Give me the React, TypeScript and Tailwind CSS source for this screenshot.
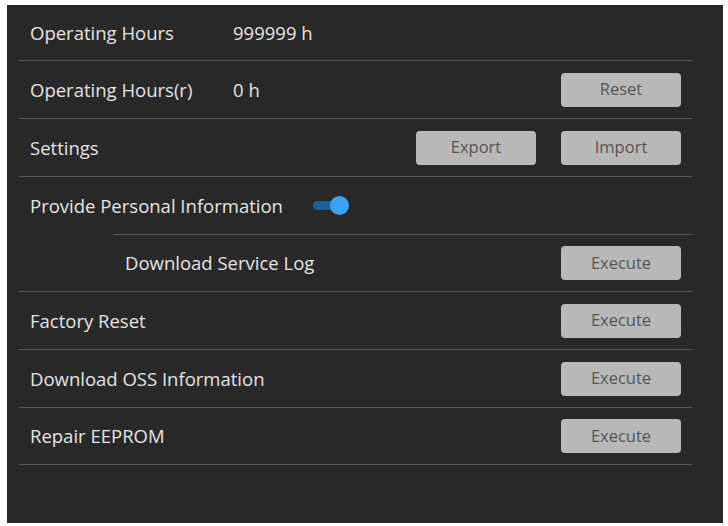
import React, { useState } from "react";

const Btn = ({ label }: { label: string }) => (
  <button className="w-[120px] h-[34px] rounded-[4px] bg-[#b9b9b9] text-[#545454] text-[16.5px]">
    {label}
  </button>
);

const Row = ({
  children,
  h = "h-[58px]",
}: {
  children: React.ReactNode;
  h?: string;
}) => (
  <div className={`flex items-center px-[11px] border-b border-[#5a5a5a] ${h}`}>
    {children}
  </div>
);

const App = () => {
  const [on, setOn] = useState(true);

  return (
    <div
      className="w-[728px] h-[526px] bg-white pt-[5px] pl-[7px]"
      style={{ fontFamily: '"Open Sans", "Noto Sans", sans-serif' }}
    >
      <div className="w-[716px] h-[518px] bg-[#282828] pl-[12px] pr-[31px] text-[#e4e4e4] text-[18.5px]">
        <Row h="h-[56px]">
          <span className="w-[203px]">Operating Hours</span>
          <span>999999 h</span>
        </Row>
        <Row>
          <span className="w-[203px]">Operating Hours(r)</span>
          <span>0 h</span>
          <div className="ml-auto">
            <Btn label="Reset" />
          </div>
        </Row>
        <Row>
          <span>Settings</span>
          <div className="ml-auto flex gap-[25px]">
            <Btn label="Export" />
            <Btn label="Import" />
          </div>
        </Row>
        <div className="flex items-center px-[11px] h-[57px]">
          <span>Provide Personal Information</span>
          <div
            onClick={() => setOn(!on)}
            className="relative ml-[30px] w-[36px] h-[20px] flex items-center cursor-pointer"
          >
            <div className="w-[28px] h-[9px] rounded-full bg-[#1d5f99]" />
            <div className="absolute right-0 w-[19px] h-[19px] rounded-full bg-[#3ea2f2]" />
          </div>
        </div>
        <div className="ml-[94px] border-t border-[#5a5a5a]" />
        <Row h="h-[57px]">
          <span className="pl-[95px]">Download Service Log</span>
          <div className="ml-auto">
            <Btn label="Execute" />
          </div>
        </Row>
        <Row>
          <span>Factory Reset</span>
          <div className="ml-auto">
            <Btn label="Execute" />
          </div>
        </Row>
        <Row>
          <span>Download OSS Information</span>
          <div className="ml-auto">
            <Btn label="Execute" />
          </div>
        </Row>
        <Row h="h-[57px]">
          <span>Repair EEPROM</span>
          <div className="ml-auto">
            <Btn label="Execute" />
          </div>
        </Row>
      </div>
    </div>
  );
};

export default App;
